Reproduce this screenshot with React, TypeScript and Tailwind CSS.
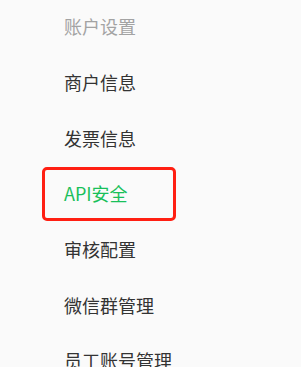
import React from 'react';

const items = ['商户信息', '发票信息', 'API安全', '审核配置', '微信群管理', '员工账号管理'];

export default function App() {
  const active = 'API安全';

  return (
    <div
      className="w-[301px] h-[367px] overflow-hidden bg-[#fafafa]"
      style={{ fontFamily: '"Noto Sans CJK SC", "Liberation Sans", sans-serif' }}
    >
      <ul className="flex flex-col -mt-[1px]">
        <li className="h-[55.67px] flex items-center pl-16 text-[18px] text-[#a3a3a3]">
          账户设置
        </li>
        {items.map((item) => (
          <li key={item} className="h-[55.67px] flex items-center text-[18px]">
            {item === active ? (
              <div className="ml-[42px] w-[134px] h-[54px] flex items-center pl-[19px] border-[3px] border-[#ff1f12] rounded-[5px] text-[#19c05a]">
                {item}
              </div>
            ) : (
              <span className="pl-16 text-[#333333]">{item}</span>
            )}
          </li>
        ))}
      </ul>
    </div>
  );
}
